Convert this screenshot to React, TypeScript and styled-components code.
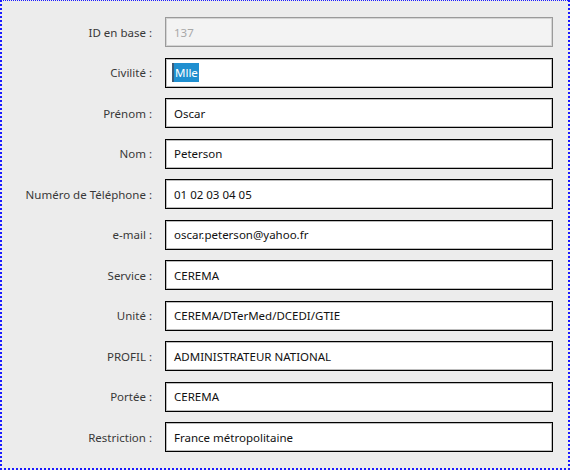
import React from "react";
import styled, { createGlobalStyle } from "styled-components";

const Global = createGlobalStyle`
  html, body { margin: 0; padding: 0; background: #ececec; }
  body { font-family: "Noto Sans", "Open Sans", sans-serif; }
`;

const Frame = styled.div`
  box-sizing: border-box;
  width: 570px;
  height: 470px;
  background: #ececec;
  border: 2px dotted #1a1aff;
  border-top-width: 1px;
  padding-top: 16px;
`;

const Form = styled.div`
  display: grid;
  grid-template-columns: 150px 388px;
  column-gap: 13px;
  row-gap: 10.5px;
  align-items: center;
`;

const Label = styled.div`
  text-align: right;
  font-size: 11.5px;
  color: #383838;
  white-space: nowrap;
`;

const Field = styled.div<{ $disabled?: boolean }>`
  box-sizing: border-box;
  height: 30px;
  display: flex;
  align-items: center;
  padding-left: 8px;
  font-size: 11.5px;
  background: ${(p) => (p.$disabled ? "#f3f3f3" : "#ffffff")};
  border: 1px solid ${(p) => (p.$disabled ? "#9a9a9a" : "#000000")};
  box-shadow: inset 0 0 0 1px ${(p) => (p.$disabled ? "#d4d4d4" : "#bdbdbd")};
  color: ${(p) => (p.$disabled ? "#a8a8a8" : "#111111")};
  white-space: nowrap;
`;

const Selected = styled.span`
  background: #1f8fd0;
  color: #ffffff;
  padding: 2px 1px 2px 1px;
  border-left: 2px solid #3b5b78;
  margin-left: -2px;
`;

const rows: { label: string; value: string; disabled?: boolean; selected?: boolean }[] = [
  { label: "ID en base :", value: "137", disabled: true },
  { label: "Civilité :", value: "Mlle", selected: true },
  { label: "Prénom :", value: "Oscar" },
  { label: "Nom :", value: "Peterson" },
  { label: "Numéro de Téléphone :", value: "01 02 03 04 05" },
  { label: "e-mail :", value: "oscar.peterson@yahoo.fr" },
  { label: "Service :", value: "CEREMA" },
  { label: "Unité :", value: "CEREMA/DTerMed/DCEDI/GTIE" },
  { label: "PROFIL :", value: "ADMINISTRATEUR NATIONAL" },
  { label: "Portée :", value: "CEREMA" },
  { label: "Restriction :", value: "France métropolitaine" },
];

export default function App() {
  return (
    <>
      <Global />
      <Frame>
        <Form>
          {rows.map((r) => (
            <React.Fragment key={r.label}>
              <Label>{r.label}</Label>
              <Field $disabled={r.disabled}>
                {r.selected ? <Selected>{r.value}</Selected> : r.value}
              </Field>
            </React.Fragment>
          ))}
        </Form>
      </Frame>
    </>
  );
}
